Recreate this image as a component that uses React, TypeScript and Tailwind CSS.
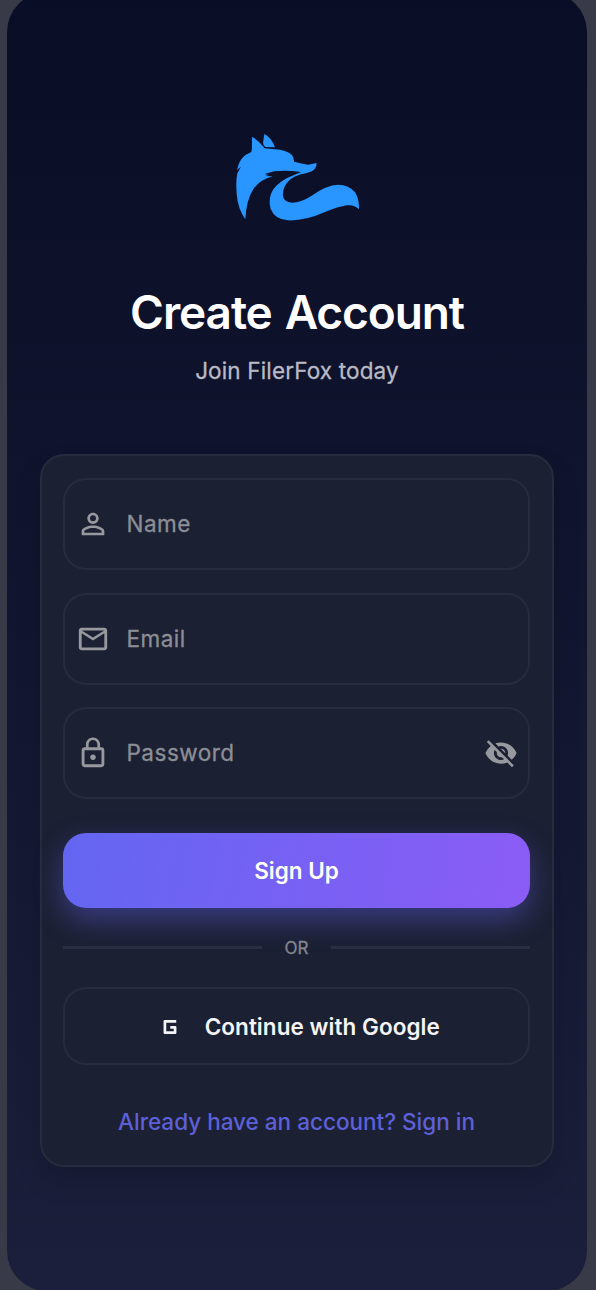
import React from "react";
import {
  MdPersonOutline,
  MdMailOutline,
  MdLockOutline,
  MdVisibilityOff,
} from "react-icons/md";

function FoxLogo() {
  return (
    <svg viewBox="0 0 450 345" className="h-[115px] w-[150px]" fill="#2996ff" aria-hidden="true">
      <path d="M96 50 Q115 61 128 78 L134 85 L165 88 Q198 90 215 104 Q223 112 222 125 Q245 131 264 134 L290 129 Q289 146 276 154 L258 160 Q220 165 201 188 Q187 207 189 228 Q192 246 216 248 Q244 247 275 227 Q320 195 354 194 Q387 194 405 217 Q418 237 417 268 Q402 253 380 256 Q355 260 315 276 Q255 303 204 301 Q165 299 152 267 Q143 235 160 208 Q178 181 224 164 L243 156 Q200 150 163 154 L134 162 L146 165 L136 168 L158 169 Q119 179 99 209 Q79 239 76 298 Q53 265 50 221 Q47 184 52 160 L63 140 L51 150 Q56 126 67 114 Q78 102 94 96 Q96 88 96 77 Z" />
      <path d="M133 42 Q153 51 165 82 L136 81 Q127 73 130 62 Z" />
    </svg>
  );
}

function SquareG() {
  return (
    <svg viewBox="0 0 24 24" className="mr-[17.5px] h-[34px] w-[34px]" fill="none" stroke="currentColor" strokeWidth="1.9" aria-hidden="true">
      <path d="M16.4 8H8.4V16H15.6V12.3H12.2" strokeLinejoin="round" />
    </svg>
  );
}

function Field({
  icon,
  label,
  trailing,
}: {
  icon: React.ReactNode;
  label: string;
  trailing?: React.ReactNode;
}) {
  return (
    <div className="flex h-[92px] items-center rounded-[23px] border-2 border-[#272b3d] pl-[9px] pr-[10.5px] text-[#98999e]">
      <span className="flex w-[38px] justify-center text-[34px]">{icon}</span>
      <span className="ml-[14.5px] flex-1 text-[22.5px] tracking-[0.5px] text-[#8c8e95] [-webkit-text-stroke:0.3px_#8c8e95]">{label}</span>
      {trailing}
    </div>
  );
}

export default function App() {
  return (
    <div className="h-[1290px] w-[596px] overflow-hidden bg-[#383a47] pl-[7px] font-['Inter',sans-serif]">
      <main className="-mt-[8px] flex h-[1299px] w-[580px] flex-col items-center rounded-[40px] bg-linear-to-b from-[#090d25] to-[#1b1f3b]">
        <div className="mt-[128px] mr-[4px] flex justify-center">
          <FoxLogo />
        </div>
        <h1 className="mt-[49px] whitespace-nowrap text-[46px] leading-[56px] font-semibold tracking-[-1.1px] [word-spacing:2.5px] text-white">
          Create Account
        </h1>
        <p className="mt-[17px] text-[22.5px] leading-[28px] tracking-[0.15px] text-[#b9bac4] [-webkit-text-stroke:0.3px_#b9bac4]">
          Join FilerFox today
        </p>

        <section className="mt-[69px] mr-[1px] flex h-[713px] w-[514px] flex-col rounded-[24px] border-2 border-[#272b3d] bg-[#1c2033] px-[21.5px] pt-[22px] shadow-[0_14px_28px_rgba(0,0,0,0.14)]">
          <div className="flex flex-col gap-[22.5px]">
            <Field icon={<MdPersonOutline />} label="Name" />
            <Field icon={<MdMailOutline />} label="Email" />
            <Field
              icon={<MdLockOutline />}
              label="Password"
              trailing={<MdVisibilityOff className="text-[34px]" />}
            />
          </div>

          <button className="mt-[34px] h-[75px] shrink-0 rounded-[23px] bg-linear-[100deg] from-[#6366f1] to-[#8b5cf6] text-[22.5px] font-semibold text-white shadow-[0_12px_29px_rgba(99,102,241,0.4)]">
            Sign Up
          </button>

          <div className="mt-[28.5px] flex h-[22px] items-center justify-between">
            <span className="h-[3px] w-[199px] bg-[#2b2d40]" />
            <span className="text-[17px] leading-[22px] text-[#85868f] [-webkit-text-stroke:0.3px_#85868f]">OR</span>
            <span className="h-[3px] w-[199px] bg-[#2b2d40]" />
          </div>

          <button className="mt-[28.5px] flex h-[78px] shrink-0 items-center justify-center rounded-[23px] border-2 border-[#272b3d] pt-px text-[22.5px] font-semibold tracking-[0.05px] text-[#f4f4f6]">
            <SquareG />
            <span>Continue with Google</span>
          </button>

          <a className="mt-[43px] text-center text-[22.5px] leading-[28px] font-medium text-[#5d60d9]">
            Already have an account? Sign in
          </a>
        </section>
      </main>
    </div>
  );
}
